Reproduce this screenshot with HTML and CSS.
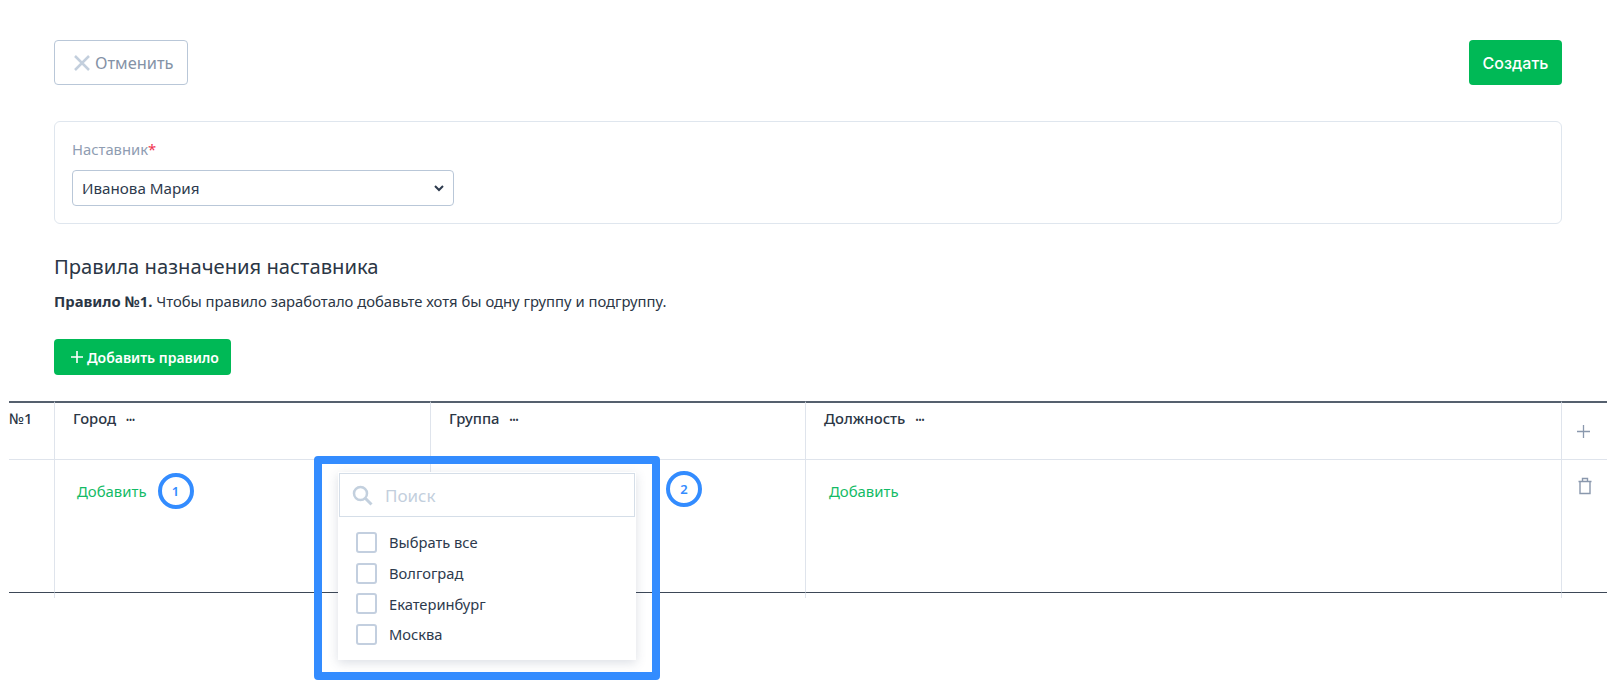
FILE: index.html
```html
<!DOCTYPE html>
<html lang="ru">
<head>
<meta charset="utf-8">
<title>Правила назначения наставника</title>
<link rel="stylesheet" href="styles.css">
</head>
<body>
<div class="page">
  <div class="toolbar">
    <button class="btn btn-cancel">
      <svg class="x-icon" width="16" height="16" viewBox="0 0 16 16"><path d="M1 1l14 14M15 1L1 15" fill="none" stroke="currentColor" stroke-width="2.500"/></svg>
      Отменить
    </button>
    <button class="btn btn-create">Создать</button>
  </div>
  <section class="card">
    <label class="field-label">Наставник<span class="req">*</span></label>
    <div class="select">
      <span>Иванова Мария</span>
      <svg width="10" height="7" viewBox="0 0 10 7"><path d="M1 1l4 4 4-4" fill="none" stroke="#2d3a4d" stroke-width="2"/></svg>
    </div>
  </section>
  <h2 class="title">Правила назначения наставника</h2>
  <p class="hint"><b>Правило №1.</b> Чтобы правило заработало добавьте хотя бы одну группу и подгруппу.</p>
  <button class="btn btn-add">
    <svg width="12" height="12" viewBox="0 0 12 12"><path d="M6 0v12M0 6h12" fill="none" stroke="#fff" stroke-width="1.6"/></svg>
    Добавить правило
  </button>
</div>

<div class="rule-table">
  <div class="cell head num">№1</div>
  <div class="cell head col"><span>Город</span><i class="dots">•••</i></div>
  <div class="cell head col"><span>Группа</span><i class="dots">•••</i></div>
  <div class="cell head col"><span>Должность</span><i class="dots">•••</i></div>
  <div class="cell head action">
    <svg class="plus-icon" width="13" height="13" viewBox="0 0 13 13"><path d="M6.5 0v13M0 6.5h13" fill="none" stroke="#8a98ad" stroke-width="1.3"/></svg>
  </div>

  <div class="cell body num"></div>
  <div class="cell body add-city"><a class="add-link">Добавить</a><span class="badge badge-inline">1</span></div>
  <div class="cell body"></div>
  <div class="cell body add-pos"><a class="add-link">Добавить</a></div>
  <div class="cell body action trash">
    <svg width="14" height="18" viewBox="0 0 14 18"><path d="M2 4.500h10V16.500H2zM0.500 4.500h13M4.500 4V1.500h5V4" fill="none" stroke="#8a98ad" stroke-width="1.400"/></svg>
  </div>

  <div class="tail"></div><div class="tail"></div><div class="tail"></div><div class="tail"></div><div class="tail"></div>

  <div class="highlight">
    <div class="dropdown">
      <div class="search">
        <svg width="21" height="21" viewBox="0 0 21 21"><circle cx="8.500" cy="8.500" r="6.500" fill="none" stroke="#c3d0de" stroke-width="2.500"/><path d="M13.500 13.500l6 6" fill="none" stroke="#c3d0de" stroke-width="3"/></svg>
        <span class="placeholder">Поиск</span>
      </div>
      <ul class="options">
        <li><span class="check"></span>Выбрать все</li>
        <li><span class="check"></span>Волгоград</li>
        <li><span class="check"></span>Екатеринбург</li>
        <li><span class="check"></span>Москва</li>
      </ul>
    </div>
  </div>
  <span class="badge badge-two">2</span>
</div>
</body>
</html>
```
FILE: styles.css
```css
* { box-sizing: border-box; }
html, body { margin: 0; padding: 0; background: #fff; }
body {
  font-family: "Noto Sans", sans-serif;
  color: #2b3645;
  width: 1614px;
  height: 688px;
  overflow: hidden;
}
.page { padding: 40px 52px 0 54px; }
.toolbar { display: flex; justify-content: space-between; }
.btn {
  display: inline-flex;
  align-items: center;
  font-family: "Noto Sans", sans-serif;
  border-radius: 4px;
  cursor: pointer;
}
.btn-cancel {
  width: 134px;
  height: 45px;
  padding: 0 0 0 19px;
  gap: 5px;
  background: #fff;
  border: 1px solid #b9c7d8;
  color: #8492a6;
  font-size: 16.400px;
}
.x-icon { color: #c3cfdd; }
.btn-create {
  width: 93px;
  height: 45px;
  justify-content: center;
  background: #00b956;
  border: 0;
  color: #fff;
  font-family: Inter, sans-serif;
  font-size: 16px;
  font-weight: 500;
}
.card {
  margin-top: 36px;
  height: 103px;
  border: 1px solid #dfe6ee;
  border-radius: 6px;
  padding: 17px 17px 0;
}
.field-label {
  display: block;
  height: 31px;
  font-size: 14.800px;
  line-height: 20px;
  color: #8f9db2;
}
.req { color: #f0334f; }
.select {
  width: 382px;
  height: 36px;
  border: 1px solid #b9c7d8;
  border-radius: 4px;
  padding: 0 9px;
  display: flex;
  align-items: center;
  justify-content: space-between;
  font-size: 15.200px;
  color: #2d3a4d;
}
.title {
  margin: 29px 0 0;
  font-size: 20.200px;
  font-weight: 400;
  line-height: 26px;
  color: #2b3645;
}
.hint {
  margin: 12px 0 0;
  font-size: 14.800px;
  line-height: 20px;
}
.hint b { font-weight: 700; }
.btn-add {
  margin-top: 28px;
  width: 177px;
  height: 36px;
  padding: 0 0 0 17px;
  gap: 4px;
  background: #00b956;
  border: 0;
  color: #fff;
  font-size: 14px;
  font-weight: 600;
}
.rule-table {
  position: relative;
  margin: 26px 0 0 9px;
  width: 1598px;
  display: grid;
  grid-template-columns: 45px 376px 375px 756px 46px;
  grid-template-rows: 59px 133px 5px;
}
.cell, .tail { border-left: 1px solid #dfe4ec; }
.num, .tail:nth-child(11) { border-left: 0; }
.head {
  border-top: 2px solid #55606e;
  border-bottom: 1px solid #dfe4ec;
  font-size: 14.800px;
  font-weight: 500;
  line-height: 20px;
  padding-top: 5px;
}
.col { padding-left: 18px; }
.body { border-bottom: 1.500px solid #3d4857; }
.dots {
  font-style: normal;
  font-size: 8px;
  margin-left: 10px;
  vertical-align: 1px;
}
.action { display: flex; justify-content: center; }
.head.action { align-items: flex-end; padding: 0 2px 21px 0; }
.trash { padding-top: 17px; }
.add-city { padding: 20px 0 0 22px; display: flex; align-items: flex-start; }
.add-pos { padding: 20px 0 0 23px; }
.add-link {
  color: #13bb66;
  font-size: 14.900px;
  line-height: 22px;
}
.badge {
  width: 36px;
  height: 36px;
  border: 4px solid #338cff;
  border-radius: 50%;
  background: #fff;
  color: #338cff;
  font-size: 13px;
  font-weight: 600;
  display: flex;
  align-items: center;
  justify-content: center;
}
.badge-inline { margin: -7px 0 0 11px; }
.badge-two { position: absolute; left: 657px; top: 70px; }
.highlight {
  position: absolute;
  left: 305px;
  top: 55px;
  width: 346px;
  height: 224px;
  border: 8px solid #338cff;
  border-radius: 4px;
}
.dropdown {
  margin: 8px 0 0 16px;
  width: 298px;
  height: 188px;
  padding-top: 1px;
  background: #fff;
  box-shadow: 0 3px 10px rgba(60, 80, 110, .18);
}
.search {
  height: 44px;
  border: 1px solid #d5dee8;
  margin: 0 1px;
  padding-left: 12px;
  display: flex;
  align-items: center;
  gap: 12px;
}
.placeholder { font-size: 17px; color: #c3cfdd; }
.options {
  list-style: none;
  margin: 0;
  padding: 10px 0 0 18px;
  font-size: 14.700px;
  color: #2d3a4d;
}
.options li {
  height: 30.700px;
  display: flex;
  align-items: center;
  gap: 12px;
}
.check {
  width: 21px;
  height: 21px;
  border: 2px solid #c3cfdf;
  border-radius: 3px;
}
```
